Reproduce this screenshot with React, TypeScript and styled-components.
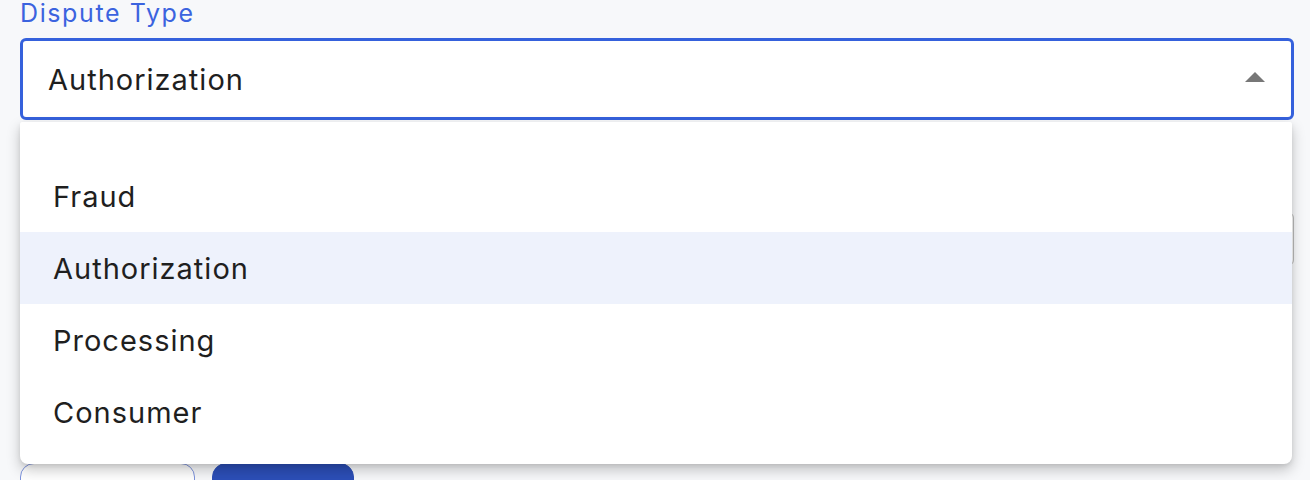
import React from 'react';
import styled, { createGlobalStyle } from 'styled-components';

const GlobalStyle = createGlobalStyle`
  html, body {
    margin: 0;
    padding: 0;
    background: #f7f8fa;
    font-family: Inter, "Noto Sans", sans-serif;
    color: #222;
  }
`;

const Page = styled.div`
  width: 1310px;
  height: 480px;
  overflow: hidden;
  padding: 0 16px 0 20px;
  box-sizing: border-box;
`;

const Field = styled.div`
  position: relative;
  display: flex;
  flex-direction: column;
`;

const Label = styled.label`
  font-size: 25px;
  line-height: 26px;
  letter-spacing: 1.6px;
  color: #3b63df;
  height: 38px;
`;

const SelectBox = styled.div`
  height: 82px;
  box-sizing: border-box;
  border: 3px solid #3561dc;
  border-radius: 6px;
  background: #fff;
  display: flex;
  align-items: center;
  justify-content: space-between;
  padding: 0 26px 0 25px;
  font-size: 29px;
  letter-spacing: 1px;
  color: #1f1f1f;
`;

const Arrow = styled.span`
  width: 0;
  height: 0;
  border-left: 10px solid transparent;
  border-right: 10px solid transparent;
  border-bottom: 10px solid #777;
  margin-top: -4px;
`;

const Menu = styled.ul`
  position: absolute;
  top: 122px;
  left: 0;
  right: 2px;
  margin: 0;
  padding: 38px 0 16px;
  list-style: none;
  background: #fff;
  border-radius: 2px 2px 8px 8px;
  box-shadow: 0 6px 14px rgba(0, 0, 0, 0.22), 0 2px 4px rgba(0, 0, 0, 0.08);
  z-index: 2;
`;

const Option = styled.li<{ $active?: boolean }>`
  height: 72px;
  display: flex;
  align-items: center;
  padding-left: 33px;
  font-size: 29px;
  letter-spacing: 1px;
  color: #1f1f1f;
  background: ${({ $active }) => ($active ? '#eef2fc' : '#fff')};
`;

const HiddenInput = styled.div`
  margin-top: 92px;
  height: 52px;
  border: 1px solid #bbb;
  border-radius: 6px;
  background: #fff;
`;

const Buttons = styled.div`
  display: flex;
  gap: 17px;
  margin-top: 197px;
`;

const Button = styled.button<{ $primary?: boolean }>`
  height: 44px;
  width: ${({ $primary }) => ($primary ? '142px' : '175px')};
  border-radius: 14px;
  border: 1.5px solid ${({ $primary }) => ($primary ? '#2c4fb8' : '#7d93dd')};
  background: ${({ $primary }) => ($primary ? '#2c4fb8' : '#fff')};
`;

const options = ['Fraud', 'Authorization', 'Processing', 'Consumer'];

export default function App() {
  const selected = 'Authorization';
  return (
    <React.Fragment>
      <GlobalStyle />
      <Page>
        <Field>
          <Label>Dispute Type</Label>
          <SelectBox>
            <span>{selected}</span>
            <Arrow />
          </SelectBox>
          <Menu>
            {options.map(o => (
              <Option key={o} $active={o === selected}>
                {o}
              </Option>
            ))}
          </Menu>
          <HiddenInput />
          <Buttons>
            <Button />
            <Button $primary />
          </Buttons>
        </Field>
      </Page>
    </React.Fragment>
  );
}
